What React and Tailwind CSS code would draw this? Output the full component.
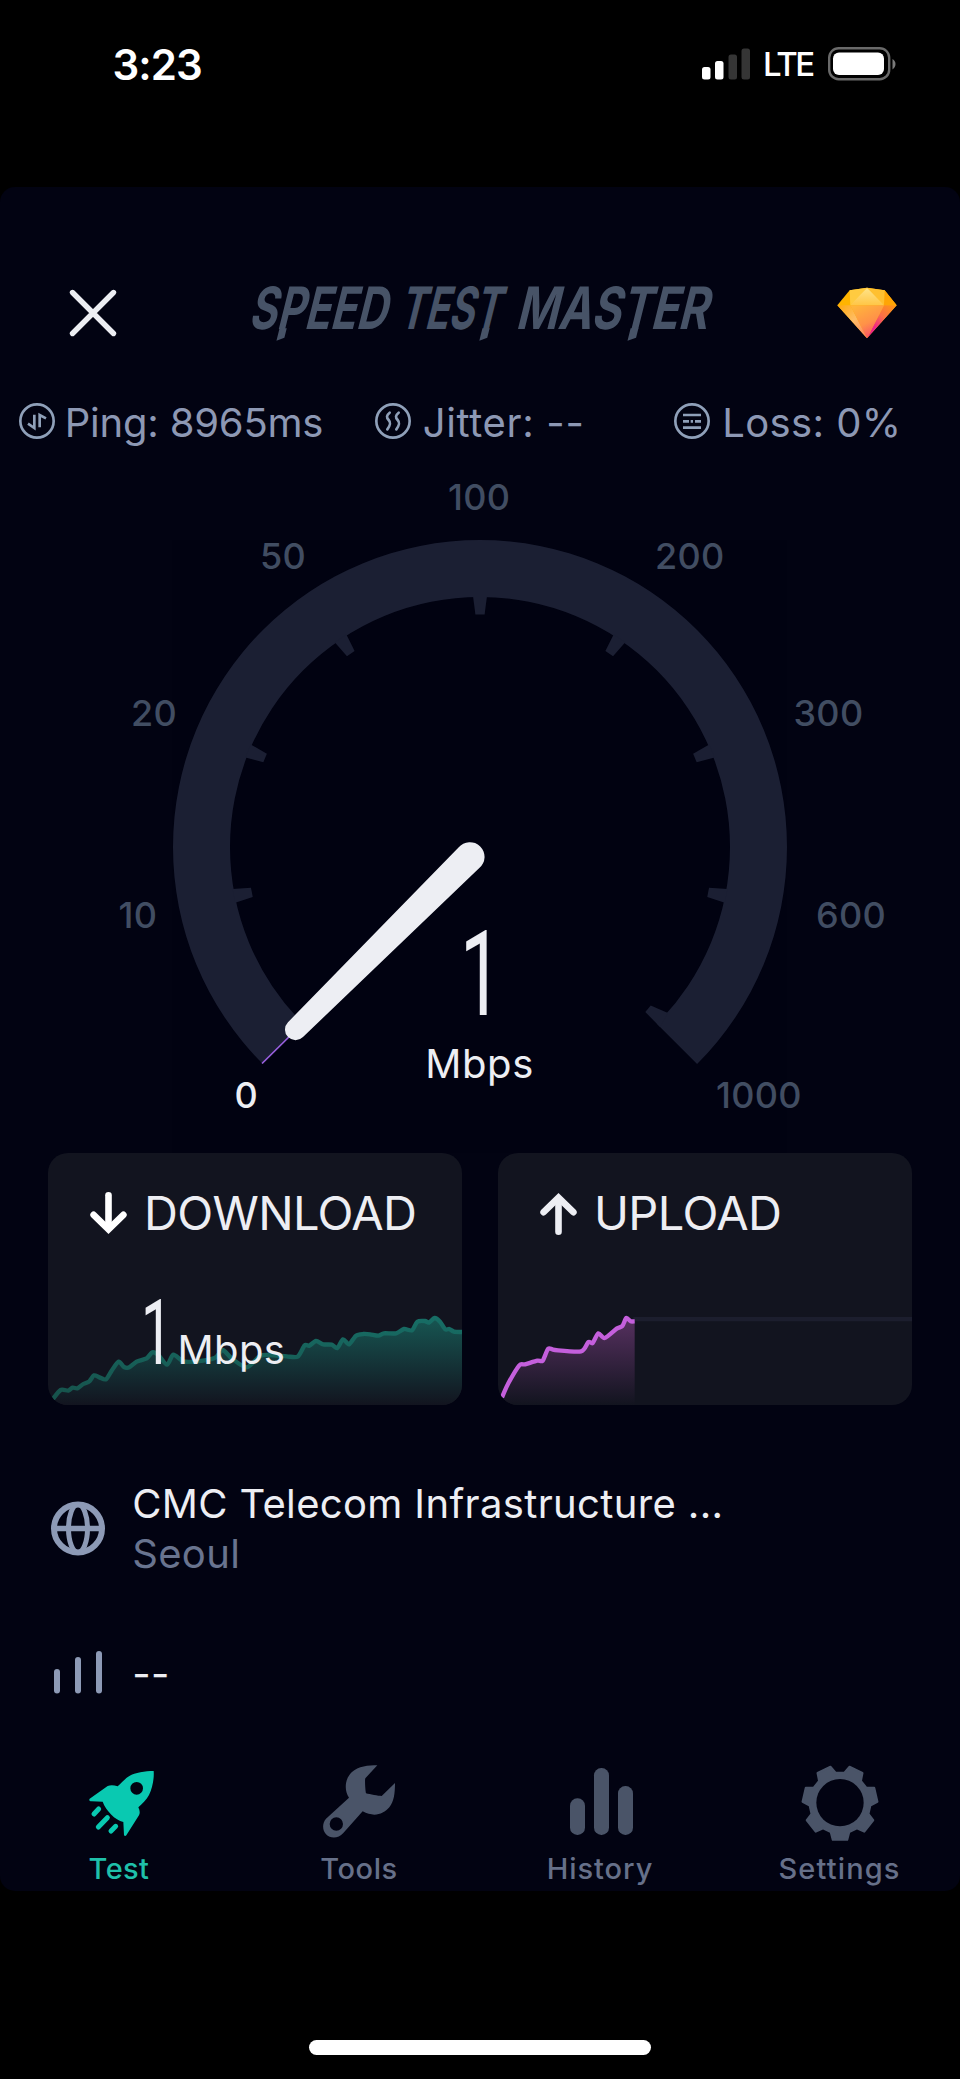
const gaugeLabels = [
  { value: "0", x: 234.5, y: 1107.5, active: true },
  { value: "10", x: 118.5, y: 928 },
  { value: "20", x: 131, y: 726 },
  { value: "50", x: 260, y: 569 },
  { value: "100", x: 448, y: 509.5 },
  { value: "200", x: 655, y: 569 },
  { value: "300", x: 793.5, y: 726 },
  { value: "600", x: 816, y: 928 },
  { value: "1000", x: 716, y: 1107.5 },
];

const downloadPoints = [
  [14, 739], [38, 711], [61, 713], [74, 704], [88, 706], [106, 693], [124, 685], [138, 667], [154, 673], [174, 679],
  [191, 653], [212, 626], [228, 642], [244, 643], [266, 626], [296, 616], [313, 598], [331, 606], [357, 635], [376, 605],
  [406, 625], [446, 625], [500, 615], [524, 591], [551, 616], [596, 643], [636, 609], [666, 606], [716, 610], [749, 611],
  [770, 577], [784, 578], [804, 564], [826, 574], [851, 575], [868, 585], [885, 559], [903, 574], [924, 548], [946, 543],
  [966, 544], [991, 548], [1008, 541], [1044, 541], [1068, 528], [1092, 532], [1108, 506], [1131, 504], [1143, 509],
  [1160, 495], [1176, 506], [1192, 529], [1204, 528], [1218, 536], [1242, 537],
];

const uploadPoints = [
  [12, 733], [31, 691], [64, 637], [81, 634], [118, 623], [134, 623], [151, 587], [171, 591], [249, 595], [271, 567],
  [284, 570], [301, 541], [320, 555], [356, 527], [373, 519], [385, 495], [398, 505], [410, 505],
];

// Rounded polyline through the sample points
function smoothPath(points) {
  let d = `M${points[0][0]} ${points[0][1]}`;
  for (let i = 0; i < points.length - 1; i++) {
    const p0 = points[i - 1] || points[i];
    const p1 = points[i];
    const p2 = points[i + 1];
    const p3 = points[i + 2] || p2;
    const c1 = [p1[0] + (p2[0] - p0[0]) / 8, p1[1] + (p2[1] - p0[1]) / 8];
    const c2 = [p2[0] - (p3[0] - p1[0]) / 8, p2[1] - (p3[1] - p1[1]) / 8];
    d += ` C${c1[0]} ${c1[1]} ${c2[0]} ${c2[1]} ${p2[0]} ${p2[1]}`;
  }
  return d;
}

function gearPath(cx, cy) {
  const pts = [];
  for (let k = 0; k < 7; k++) {
    const mid = 90 + (k * 360) / 7;
    [[-17.5, 91], [-11, 112], [11, 112], [17.5, 91]].forEach(([off, r]) => {
      const a = ((mid + off) * Math.PI) / 180;
      pts.push(`${(cx + r * Math.cos(a)).toFixed(1)} ${(cy + r * Math.sin(a)).toFixed(1)}`);
    });
  }
  return `M${pts.join("L")}Z`;
}

function StatusBar() {
  return (
    <div className="h-[187px]">
      <div className="flex h-[128px] items-center pl-[112.5px] pr-16 text-white">
        <span className="flex-1 text-[42px] font-semibold tracking-[-0.9px]">3:23</span>
        <svg viewBox="0 0 48 32" className="h-8 w-12">
          <rect x="0" y="19" width="8.5" height="12.5" rx="2.5" fill="#fff" />
          <rect x="13" y="13" width="8.5" height="18.5" rx="2.5" fill="#fff" />
          <rect x="26.5" y="6.5" width="8.5" height="25" rx="2.5" fill="#353535" />
          <rect x="39.5" y="0.5" width="8.5" height="31" rx="2.5" fill="#353535" />
        </svg>
        <span className="ml-[13px] mt-0.5 w-[53px] text-[33px] font-medium tracking-[-2.4px]">LTE</span>
        <svg viewBox="0 0 68 34" className="ml-3 h-[34px] w-[68px]">
          <rect x="1.2" y="1.2" width="60" height="31" rx="9.5" fill="none" stroke="#6a6a6a" strokeWidth="2.4" />
          <rect x="5" y="5.5" width="51" height="22.5" rx="6" fill="#fff" />
          <path d="M64.5 12c4 2 4 8 0 10.500z" fill="#7a7a7a" />
        </svg>
      </div>
    </div>
  );
}

function Wordmark() {
  return (
    <svg viewBox="0 -16 480 107" className="ml-[120px] h-[107px] w-[480px] overflow-visible">
      <g transform="translate(0 53.3) skewX(-14)" fill="#475367" className="font-['Inter'] text-[58.5px] font-bold">
        <text x="8" y="0" textLength="138" lengthAdjust="spacingAndGlyphs">SPEED</text>
        <text x="158" y="0" textLength="101" lengthAdjust="spacingAndGlyphs">TEST</text>
        <text x="275" y="0" textLength="192" lengthAdjust="spacingAndGlyphs">MASTER</text>
        {/* Blade tips under P and the two Ts */}
        <path d="M39.300 -1H46.500V8.500L39.300 11.500Z" />
        <path d="M242.200 -1H249.400V8.500L242.200 11.500Z" />
        <path d="M390.400 -1H398.200V8.500L390.400 11.500Z" />
      </g>
    </svg>
  );
}

function Header() {
  return (
    <div className="flex h-24 items-center pl-[66px]">
      <svg viewBox="0 0 54 54" className="h-[54px] w-[54px]">
        <path d="M6.500 6.500L47.500 47.500M47.500 6.500L6.500 47.500" stroke="#edeef3" strokeWidth="5.400" strokeLinecap="round" />
      </svg>
      <Wordmark />
      <svg viewBox="0 0 180 156" className="ml-[117px] h-[52px] w-[60px]">
        <defs>
          <linearGradient id="gemBody" x1="0.2" y1="0" x2="0.7" y2="1">
            <stop offset="0" stopColor="#ffb53c" />
            <stop offset="0.55" stopColor="#ff9148" />
            <stop offset="1" stopColor="#f8466f" />
          </linearGradient>
          <linearGradient id="gemRight" x1="1" y1="0" x2="0.3" y2="1">
            <stop offset="0" stopColor="#ff9a10" />
            <stop offset="0.45" stopColor="#fb6f48" />
            <stop offset="0.8" stopColor="#ee2289" />
          </linearGradient>
          <linearGradient id="gemLeft" x1="0" y1="0" x2="1" y2="1">
            <stop offset="0" stopColor="#ffa90a" />
            <stop offset="0.5" stopColor="#ffbd66" />
            <stop offset="1" stopColor="#fb8063" />
          </linearGradient>
          <linearGradient id="gemTop" x1="0" y1="0" x2="0" y2="1">
            <stop offset="0" stopColor="#ffe48a" />
            <stop offset="1" stopColor="#ffc646" />
          </linearGradient>
        </defs>
        <path d="M38 10L90 2L143 10L179 55L90 154L1 55Z" fill="#ffb400" />
        <path d="M143 10L179 55H141L118 24Z" fill="#ffa505" />
        <path d="M40 55L48 42L90 2L130 36L141 55Z" fill="url(#gemTop)" />
        <path d="M90 2L38 10L40 55Z" fill="#ffcb40" />
        <path d="M90 2L143 10L141 55Z" fill="#ffc030" />
        <path d="M1 55H40L90 154Z" fill="url(#gemLeft)" />
        <path d="M179 55H141L90 154Z" fill="url(#gemRight)" />
        <path d="M40 55H141L90 154Z" fill="url(#gemBody)" />
      </svg>
    </div>
  );
}

function StatIcon({ children }) {
  return (
    <svg viewBox="0 0 108 108" className="h-9 w-9" fill="none" stroke="#8fa0b9" strokeWidth="8">
      <circle cx="54" cy="54" r="50" />
      {children}
    </svg>
  );
}

function Stats() {
  return (
    <div className="mt-[30px] flex h-[60px] items-center pl-[19px] text-[40px] leading-[60px] whitespace-nowrap text-[#8d98b4]">
      <div className="flex w-[356px] items-center">
        <StatIcon>
          <path d="M46 35V75L27 62M62 73V36L81 46" />
        </StatIcon>
        <span className="ml-[9.7px] mt-[3px] tracking-[-0.2px]">Ping: 8965ms</span>
      </div>
      <div className="flex w-[299px] items-center">
        <StatIcon>
          <path d="M44 29C34 37 34 43 41 51C48 59 47 66 37 79M71 29C61 37 61 43 68 51C75 59 74 66 64 79" strokeLinecap="round" />
        </StatIcon>
        <span className="ml-[11.7px] mt-[3px] tracking-[0.65px]">Jitter: --</span>
      </div>
      <div className="flex items-center">
        <StatIcon>
          <path d="M27 36H81M27 55H45M50 55H57M63 55H81M27 74H81" />
        </StatIcon>
        <span className="ml-[12.2px] mt-[3px] tracking-[0.4px]">Loss: 0%</span>
      </div>
    </div>
  );
}

function Gauge() {
  const ticks = [-101.25, -67.5, -33.75, 0, 33.75, 67.5, 101.25];
  return (
    <svg viewBox="0 451 960 702" className="h-[702px] w-[960px] font-['Inter']">
      <rect x="172" y="540" width="615" height="613" fill="#010211" />
      <path d="M262.900 1064.100A307 307 0 1 1 697.100 1064.100L656.800 1023.800A250 250 0 1 0 303.200 1023.800Z" fill="#1b1f33" />
      {ticks.map((deg) => (
        <path key={deg} d="M473 596L475.400 614.400H484.600L487 596Z" fill="#1b1f33" transform={`rotate(${deg} 480 847)`} />
      ))}
      <path d="M660 1027L645.300 1012L650.700 1005.500L668 1013Z" fill="#1b1f33" />
      <path d="M262 1063.500L298 1028" stroke="#9a5fe0" strokeWidth="1.6" />
      {/* Needle */}
      <path d="M458.500 847.500A14.700 14.700 0 1 1 479.300 868.100L303 1037A10.500 10.500 0 1 1 288 1022.200Z" fill="#edeef3" />
      {gaugeLabels.map((label) => (
        <text
          key={label.value}
          x={label.x}
          y={label.y}
          className={label.active ? "text-[36px] font-medium" : "text-[36px] font-medium tracking-[0.3px]"}
          fill={label.active ? "#edeef3" : "#414d62"}
        >
          {label.value}
        </text>
      ))}
      <text x="460" y="1015" textLength="42" lengthAdjust="spacingAndGlyphs" className="font-['Roboto'] text-[118px]" fill="#edeef3">
        1
      </text>
      <text x="425.300" y="1078" className="text-[40px] tracking-[0.6px]" fill="#edeef3">
        Mbps
      </text>
    </svg>
  );
}

function Cards() {
  return (
    <div className="flex gap-9 px-12 text-[#edeef3]">
      <div className="relative h-[252px] flex-1 overflow-hidden rounded-[20px] bg-[#12141f]">
        <svg viewBox="0 0 1242 756" className="absolute inset-0 h-full w-full" fill="none">
          <defs>
            <linearGradient id="downFill" x1="0" y1="490" x2="0" y2="756" gradientUnits="userSpaceOnUse">
              <stop offset="0" stopColor="#175753" />
              <stop offset="1" stopColor="#12141f" />
            </linearGradient>
            <linearGradient id="downLine" x1="0" y1="490" x2="0" y2="756" gradientUnits="userSpaceOnUse">
              <stop offset="0" stopColor="#176e66" />
              <stop offset="1" stopColor="#165049" />
            </linearGradient>
          </defs>
          <path d={`${smoothPath(downloadPoints)} V756 H14 Z`} fill="url(#downFill)" />
          <path d={smoothPath(downloadPoints)} stroke="url(#downLine)" strokeWidth="13" />
        </svg>
        <div className="relative mt-[30px] flex h-[60px] items-center pl-[42px]">
          <svg viewBox="0 0 110 130" className="h-[43px] w-[37px]" fill="none" stroke="#fff" strokeWidth="20">
            <path d="M55 10V108" strokeLinecap="round" />
            <path d="M10 69L55 113L100 69" strokeLinecap="round" />
          </svg>
          <span className="ml-[17px] text-[47px] leading-[60px] tracking-[-0.65px]">DOWNLOAD</span>
        </div>
        <div className="relative mt-[46.5px] flex items-baseline pl-[92.5px]">
          <span className="w-[36px] origin-left scale-x-[0.46] font-['Roboto'] text-[90px] leading-[88px]">
            <span className="inline-block w-[50px] origin-left scale-x-[1.35]">1</span>
          </span>
          <span className="ml-px text-[40px] leading-[40px] tracking-[0.4px]">Mbps</span>
        </div>
      </div>
      <div className="relative h-[252px] flex-1 overflow-hidden rounded-[20px] bg-[#12141f]">
        <svg viewBox="0 0 1242 756" className="absolute inset-0 h-full w-full" fill="none">
          <defs>
            <linearGradient id="upFill" x1="0" y1="490" x2="0" y2="756" gradientUnits="userSpaceOnUse">
              <stop offset="0" stopColor="#583161" />
              <stop offset="1" stopColor="#12141f" />
            </linearGradient>
          </defs>
          <path d="M406 498.500H1242" stroke="#1c1e2e" strokeWidth="13" />
          <path d={`${smoothPath(uploadPoints)} V756 H12 Z`} fill="url(#upFill)" />
          <path d={smoothPath(uploadPoints)} stroke="#c45fdc" strokeWidth="13" />
        </svg>
        <div className="relative mt-[30px] flex h-[60px] items-center pl-[42px]">
          <svg viewBox="0 0 110 130" className="h-[43px] w-[37px]" fill="none" stroke="#edeef3" strokeWidth="20">
            <path d="M55 120V22" strokeLinecap="round" />
            <path d="M10 61L55 17L100 61" strokeLinecap="round" />
          </svg>
          <span className="ml-[17px] text-[47px] leading-[60px] tracking-[-0.6px]">UPLOAD</span>
        </div>
      </div>
    </div>
  );
}

function NetworkInfo() {
  return (
    <div className="pl-[51px] text-[40px] tracking-[0.35px] text-[#edeef3]">
      <div className="mt-[74px] flex h-[99px] items-center">
        <svg viewBox="0 0 54 55" className="h-[55px] w-[54px]" fill="none" stroke="#8d9ab6" strokeWidth="6">
          <circle cx="27" cy="27.5" r="24" />
          <ellipse cx="27" cy="27.5" rx="9.500" ry="24" strokeWidth="5" />
          <path d="M3 27.500H51" strokeWidth="5.500" />
        </svg>
        <div className="ml-[27.2px] leading-[49.5px]">
          <div>CMC Telecom Infrastructure ...</div>
          <div className="text-[#69748f]">Seoul</div>
        </div>
      </div>
      <div className="mt-16 flex h-[60px] items-center">
        <svg viewBox="0 0 54 44" className="h-11 w-[54px]" fill="#8d9ab6">
          <rect x="3" y="19" width="6" height="24.500" rx="3" />
          <rect x="24" y="7" width="6" height="36.500" rx="3" />
          <rect x="45" y="1" width="6" height="42.500" rx="3" />
        </svg>
        <span className="ml-[27.2px] mt-[3px] leading-[60px]">--</span>
      </div>
    </div>
  );
}

function TabBar() {
  return (
    <div className="grid grid-cols-4 pt-[60px] text-center text-[29px] leading-10 font-medium text-[#667089]">
      <div className="flex flex-col items-center gap-[7px] text-[#1fc0aa]">
        <svg viewBox="120 66 240 240" className="h-20 w-20">
          <path
            fillRule="evenodd"
            fill="#09c9b1"
            d="M341 93C315 93 285 98 268 108C255 116 245 128 233 139C222 135 212 134 203 138L149 176C146 180 149 184 155 184L188 185C198 212 225 240 250 246L252 285C253 289 257 289 259 286L297 226C301 218 299 210 295 202C305 192 320 180 327 165C337 145 343 115 341 93ZM290 126A19 19 0 1 0 290 164A19 19 0 1 0 290 126Z"
          />
          <path d="M162 222L176 207M175 261L202 233M213 273L227 259" stroke="#09c9b1" strokeWidth="15" strokeLinecap="round" />
        </svg>
        <span className="pr-0.5 tracking-[0.4px]">Test</span>
      </div>
      <div className="flex flex-col items-center gap-[7px]">
        <svg viewBox="840 66 240 240" className="h-20 w-20">
          <path
            fillRule="evenodd"
            fill="#4a5468"
            d="M1012 76L976 115C974 121 976 150 978 160C990 163 1015 168 1025 168L1065 129C1065 160 1062 185 1048 202C1030 224 1000 232 968 214L910 279C895 296 872 297 858 283C847 270 846 250 858 236L927 173C912 150 914 118 935 97C955 78 985 76 1012 76ZM889 232A20 20 0 1 0 889 272A20 20 0 1 0 889 232Z"
          />
        </svg>
        <span className="pr-0.5 tracking-[0.6px]">Tools</span>
      </div>
      <div className="flex flex-col items-center gap-[7px]">
        <svg viewBox="180 66 240 240" className="h-20 w-20" fill="#4a5468">
          <rect x="210" y="175" width="45" height="110" rx="22" />
          <rect x="282" y="84" width="45" height="201" rx="22" />
          <rect x="354" y="138" width="45" height="147" rx="22" />
        </svg>
        <span className="tracking-[0.95px]">History</span>
      </div>
      <div className="flex flex-col items-center gap-[7px]">
        <svg viewBox="900 66 240 240" className="h-20 w-20">
          <path d={gearPath(1020, 189)} fill="#4a5468" stroke="#4a5468" strokeWidth="7" strokeLinejoin="round" />
          <circle cx="1020" cy="188" r="71" fill="#020312" />
        </svg>
        <span className="pr-px tracking-[1.15px]">Settings</span>
      </div>
    </div>
  );
}

export default function App() {
  return (
    <div className="flex h-[2079px] w-[960px] flex-col bg-black font-['Inter',sans-serif]">
      <StatusBar />
      <div className="h-[1704px] overflow-hidden rounded-[15px] bg-[#020312] pt-[78px]">
        <Header />
        <Stats />
        <Gauge />
        <Cards />
        <NetworkInfo />
        <TabBar />
      </div>
      <div className="mx-auto mt-[149px] h-[15px] w-[342px] rounded-full bg-white" />
    </div>
  );
}
